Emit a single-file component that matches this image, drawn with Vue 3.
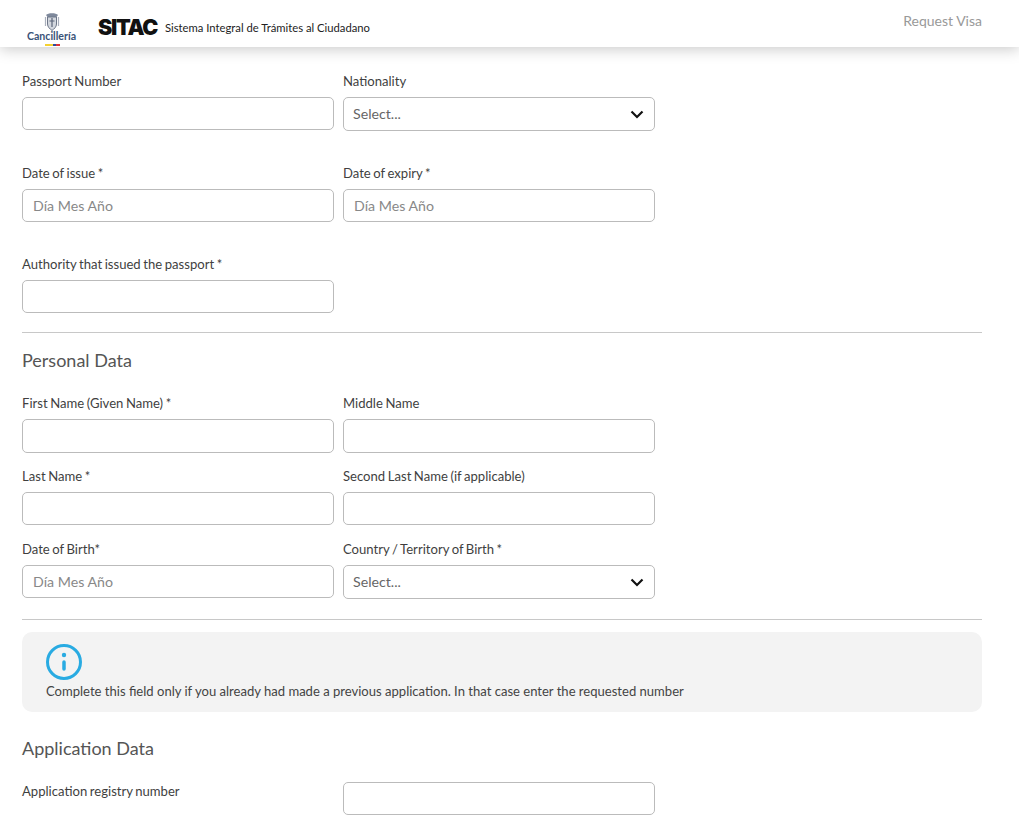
<template>
  <div class="page">
    <header class="top-bar">
      <div class="brand">
        <div class="ministry">
          <svg class="arms" width="18" height="20" viewBox="0 0 18 20" fill="none">
            <path d="M3 3C5 0.500 13 0.500 15 3L13.500 5H4.500Z" fill="#7f899c" />
            <path d="M4.500 5H13.500V12C13.500 15 11 17 9 18.500C7 17 4.500 15 4.500 12Z" fill="#d3d7de" stroke="#6d7688" stroke-width="1" />
            <path d="M9 6V15M6.500 9H11.500" stroke="#5a6478" stroke-width="1.200" />
            <path d="M2.500 5V14M15.500 5V14" stroke="#aab0bd" stroke-width="1.200" />
          </svg>
          <span class="ministry-name">Cancillería</span>
          <span class="flag"><i class="yellow"></i><i class="blue"></i><i class="red"></i></span>
        </div>
        <span class="sitac">SITAC</span>
        <span class="sitac-full">Sistema Integral de Trámites al Ciudadano</span>
      </div>
      <a class="request-link">Request Visa</a>
    </header>

    <main class="content">
      <section class="rows-wide">
        <div class="form-row">
          <div class="field">
            <label>Passport Number</label>
            <input type="text" />
          </div>
          <div class="field">
            <label>Nationality</label>
            <div class="select">
              <span>Select...</span>
              <svg width="14" height="9" viewBox="0 0 14 9" fill="none">
                <path d="M1.500 1.500L7 7L12.500 1.500" stroke="#111" stroke-width="2.200" />
              </svg>
            </div>
          </div>
        </div>
        <div class="form-row">
          <div class="field">
            <label>Date of issue *</label>
            <input type="text" placeholder="Día Mes Año" />
          </div>
          <div class="field">
            <label>Date of expiry *</label>
            <input type="text" placeholder="Día Mes Año" />
          </div>
        </div>
        <div class="form-row">
          <div class="field">
            <label>Authority that issued the passport *</label>
            <input type="text" />
          </div>
        </div>
      </section>

      <hr class="rule first-rule" />

      <h2 class="section-title">Personal Data</h2>
      <section class="rows-tight">
        <div class="form-row">
          <div class="field">
            <label>First Name (Given Name) *</label>
            <input class="tall" type="text" />
          </div>
          <div class="field">
            <label>Middle Name</label>
            <input class="tall" type="text" />
          </div>
        </div>
        <div class="form-row">
          <div class="field">
            <label>Last Name *</label>
            <input type="text" />
          </div>
          <div class="field">
            <label>Second Last Name (if applicable)</label>
            <input type="text" />
          </div>
        </div>
        <div class="form-row">
          <div class="field">
            <label>Date of Birth*</label>
            <input type="text" placeholder="Día Mes Año" />
          </div>
          <div class="field">
            <label>Country / Territory of Birth *</label>
            <div class="select">
              <span>Select...</span>
              <svg width="14" height="9" viewBox="0 0 14 9" fill="none">
                <path d="M1.500 1.500L7 7L12.500 1.500" stroke="#111" stroke-width="2.200" />
              </svg>
            </div>
          </div>
        </div>
      </section>

      <hr class="rule second-rule" />

      <div class="notice">
        <svg width="36" height="36" viewBox="0 0 36 36" fill="none">
          <circle cx="18" cy="18" r="16.500" stroke="#29abe2" stroke-width="3" />
          <circle cx="18" cy="11" r="2.200" fill="#29abe2" />
          <path d="M18 18V25" stroke="#29abe2" stroke-width="3.500" stroke-linecap="round" />
        </svg>
        <p>Complete this field only if you already had made a previous application. In that case enter the requested number</p>
      </div>

      <h2 class="section-title app-title">Application Data</h2>
      <div class="form-row">
        <label class="inline-label">Application registry number</label>
        <input type="text" />
      </div>
    </main>
  </div>
</template>

<script setup>
</script>

<style>
html,
body {
  background: #fff;
  overflow: hidden;
}
</style>

<style scoped>
.page {
  height: 824px;
  overflow: hidden;
  font-family: Lato, "Liberation Sans", sans-serif;
  font-size: 14px;
  color: #444;
}

.top-bar {
  display: flex;
  justify-content: space-between;
  height: 47px;
  padding: 0 37px 0 26px;
  background: #fff;
  box-shadow: 0 2px 14px rgba(0, 0, 0, 0.22);
}

.brand {
  display: flex;
  align-items: center;
  padding-top: 7px;
}

.ministry {
  display: flex;
  flex-direction: column;
  align-items: center;
  align-self: flex-start;
  width: 50px;
  padding-top: 5px;
  margin-right: 22px;
}

.arms {
  display: block;
  margin-left: 2px;
}

.ministry-name {
  font-size: 10.600px;
  line-height: 12px;
  font-weight: 700;
  color: #3a5378;
  margin: -2px 0 0 1px;
}

.flag {
  display: flex;
  width: 15px;
  height: 2px;
  margin: 2px 0 0 2px;
}

.flag i {
  display: block;
  height: 2px;
}

.flag .yellow {
  width: 8px;
  background: #f5d131;
}

.flag .blue {
  width: 3px;
  background: #2d4c9b;
}

.flag .red {
  width: 4px;
  background: #d8343c;
}

.sitac {
  font-family: Inter, "Liberation Sans", sans-serif;
  font-size: 21.500px;
  font-weight: 900;
  letter-spacing: -1.300px;
  color: #111;
  margin-right: 8px;
}

.sitac-full {
  font-size: 11.250px;
  font-weight: 400;
  color: #222;
}

.request-link {
  font-size: 14px;
  color: #999;
  line-height: 42px;
}

.content {
  padding: 24px 37px 0 22px;
}

.form-row {
  display: grid;
  grid-template-columns: 312px 312px;
  column-gap: 9px;
  align-items: start;
}

.rows-wide {
  display: flex;
  flex-direction: column;
  gap: 32px;
}

.rows-tight {
  display: grid;
  grid-auto-rows: 73px;
}

.field {
  display: flex;
  flex-direction: column;
}

label {
  display: block;
  height: 20px;
  line-height: 20px;
  margin-bottom: 6px;
  font-size: 13.100px;
  word-spacing: -0.800px;
  color: #3f3f3f;
}

input,
.select {
  box-sizing: border-box;
  width: 100%;
  height: 33px;
  border: 1px solid #bbb;
  border-radius: 5px;
  padding: 0 10px;
  font-family: inherit;
  font-size: 14.200px;
  color: #444;
  background: #fff;
  outline: none;
}

input::placeholder {
  color: #888;
  opacity: 1;
}

input.tall {
  height: 34px;
}

.select {
  display: flex;
  align-items: center;
  justify-content: space-between;
  height: 34px;
  padding: 0 10px 0 9px;
  color: #666;
}

.select span {
  margin-bottom: 2px;
}

.rule {
  border: 0;
  border-top: 1px solid #c8c8c8;
  margin: 0;
}

.first-rule {
  margin-top: 19px;
}

.second-rule {
  margin-top: 7px;
}

.section-title {
  margin: 16px 0 22px;
  font-size: 18px;
  line-height: 22px;
  font-weight: 400;
  color: #555;
}

.notice {
  margin-top: 12px;
  height: 80px;
  box-sizing: border-box;
  padding: 12px 24px 0;
  background: #f3f3f3;
  border-radius: 10px;
}

.notice svg {
  display: block;
}

.notice p {
  margin: 2px 0 0;
  font-size: 13.050px;
  line-height: 18px;
  color: #444;
}

.app-title {
  margin: 25px 0 23px;
}

.inline-label {
  margin: 0;
  height: 18px;
  line-height: 18px;
}
</style>
